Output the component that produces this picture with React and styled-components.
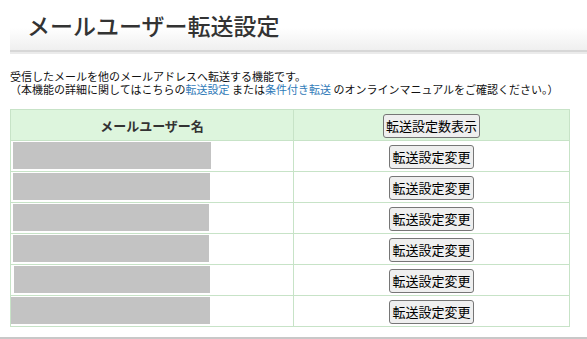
import React from "react";
import styled, { createGlobalStyle } from "styled-components";

const Global = createGlobalStyle`
  html, body { margin: 0; padding: 0; background: #fff; }
  body { font-family: "Noto Sans CJK JP", "Noto Sans", sans-serif; color: #222; }
`;

const Page = styled.div`
  width: 587px;
  height: 339px;
  display: flex;
  flex-direction: column;
  overflow: hidden;
`;

const Main = styled.div`
  margin-left: 10px;
  display: flex;
  flex-direction: column;
`;

const TitleBar = styled.div`
  height: 50px;
  display: flex;
  align-items: center;
  padding-left: 17px;
  background: linear-gradient(#ffffff 0%, #ffffff 55%, #efefef 100%);
  border-bottom: 2px solid #d7d7d7;
  box-shadow: 0 2px 0 #ebebeb;
`;

const Title = styled.h1`
  margin: 0;
  font-size: 23px;
  font-weight: 500;
  color: #333;
  letter-spacing: 0;
  line-height: 1;
`;

const Desc = styled.div`
  margin-top: 18px;
  font-size: 11px;
  line-height: 13px;
  color: #111;
`;

const Link = styled.a`
  color: #2f7ab8;
  text-decoration: none;
`;

const Table = styled.table`
  margin-top: 13px;
  width: 559px;
  border-collapse: collapse;
  border: 1px solid #c7e3c7;
  table-layout: fixed;
`;

const HeadCell = styled.th`
  background: #ddf5dd;
  border: 1px solid #c7e3c7;
  font-size: 13px;
  font-weight: 700;
  color: #333;
  text-align: center;
  vertical-align: middle;
  padding: 3px 2px 2px;
  height: 25px;
`;

const Cell = styled.td`
  border: 1px solid #c7e3c7;
  padding: 1px 2px 2px;
  text-align: ${(p) => (p.$center ? "center" : "left")};
  vertical-align: middle;
`;

const Masked = styled.div`
  height: 27px;
  width: ${(p) => p.$w}px;
  margin-left: ${(p) => p.$x}px;
  background: #c3c3c3;
`;

const Button = styled.button`
  font-family: "Noto Sans CJK JP", sans-serif;
  font-size: 13px;
  line-height: 18px;
  height: 24px;
  padding: 1px 2px;
  color: #000;
  background: #efefef;
  border: 1px solid #767676;
  border-radius: 3px;
`;

const BottomBar = styled.div`
  margin-top: auto;
  height: 2px;
  background: #c8c8c8;
`;

const rows = [
  { w: 198, x: 0 },
  { w: 197, x: 0 },
  { w: 196, x: 0 },
  { w: 196, x: 0 },
  { w: 196, x: 1 },
  { w: 199, x: -2 },
];

export default function App() {
  return (
    <Page>
      <Global />
      <Main>
        <TitleBar>
          <Title>メールユーザー転送設定</Title>
        </TitleBar>
        <Desc>
          受信したメールを他のメールアドレスへ転送する機能です。
          <br />
          （本機能の詳細に関してはこちらの<Link href="#">転送設定</Link> または
          <Link href="#">条件付き転送</Link> のオンラインマニュアルをご確認ください。）
        </Desc>
        <Table>
          <colgroup>
            <col style={{ width: 283 }} />
            <col style={{ width: 276 }} />
          </colgroup>
          <thead>
            <tr>
              <HeadCell>メールユーザー名</HeadCell>
              <HeadCell>
                <Button>転送設定数表示</Button>
              </HeadCell>
            </tr>
          </thead>
          <tbody>
            {rows.map((r, i) => (
              <tr key={i}>
                <Cell>
                  <Masked $w={r.w} $x={r.x} />
                </Cell>
                <Cell $center>
                  <Button>転送設定変更</Button>
                </Cell>
              </tr>
            ))}
          </tbody>
        </Table>
      </Main>
      <BottomBar />
    </Page>
  );
}
